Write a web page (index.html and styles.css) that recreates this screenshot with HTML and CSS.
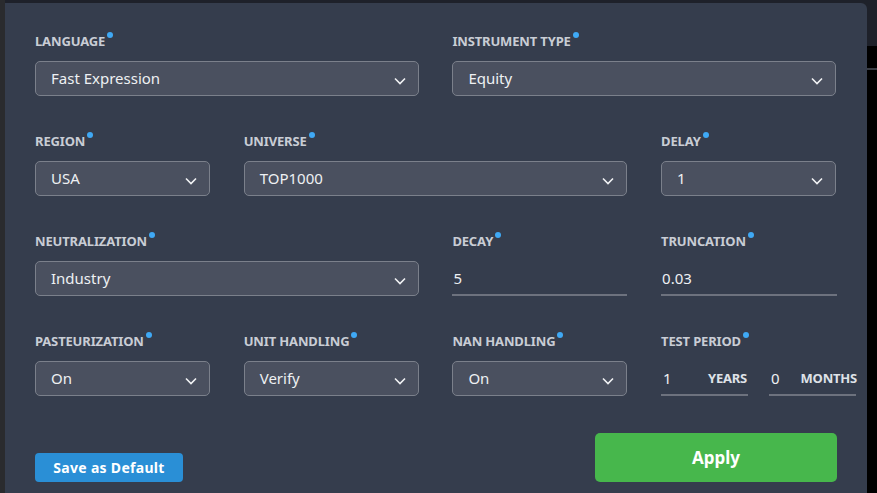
FILE: index.html
```html
<!DOCTYPE html>
<html>
<head>
<meta charset="utf-8">
<link rel="stylesheet" href="styles.css">
</head>
<body>
<div class="page">
  <div class="left-strip"></div>
  <div class="panel">
    <div class="grid">
      <div class="field span2">
        <div class="label">LANGUAGE<span class="dot"></span></div>
        <div class="select"><span>Fast Expression</span><svg class="chev" viewBox="0 0 12 8"><path d="M1 1.5 L6 6.5 L11 1.5"/></svg></div>
      </div>
      <div class="field span2">
        <div class="label">INSTRUMENT TYPE<span class="dot"></span></div>
        <div class="select"><span>Equity</span><svg class="chev" viewBox="0 0 12 8"><path d="M1 1.5 L6 6.5 L11 1.5"/></svg></div>
      </div>

      <div class="field">
        <div class="label">REGION<span class="dot"></span></div>
        <div class="select"><span>USA</span><svg class="chev" viewBox="0 0 12 8"><path d="M1 1.5 L6 6.5 L11 1.5"/></svg></div>
      </div>
      <div class="field span2">
        <div class="label">UNIVERSE<span class="dot"></span></div>
        <div class="select"><span>TOP1000</span><svg class="chev" viewBox="0 0 12 8"><path d="M1 1.5 L6 6.5 L11 1.5"/></svg></div>
      </div>
      <div class="field">
        <div class="label">DELAY<span class="dot"></span></div>
        <div class="select"><span>1</span><svg class="chev" viewBox="0 0 12 8"><path d="M1 1.5 L6 6.5 L11 1.5"/></svg></div>
      </div>

      <div class="field span2">
        <div class="label">NEUTRALIZATION<span class="dot"></span></div>
        <div class="select"><span>Industry</span><svg class="chev" viewBox="0 0 12 8"><path d="M1 1.5 L6 6.5 L11 1.5"/></svg></div>
      </div>
      <div class="field">
        <div class="label">DECAY<span class="dot"></span></div>
        <div class="input"><span>5</span></div>
      </div>
      <div class="field">
        <div class="label">TRUNCATION<span class="dot"></span></div>
        <div class="input wide"><span>0.03</span></div>
      </div>

      <div class="field">
        <div class="label">PASTEURIZATION<span class="dot"></span></div>
        <div class="select"><span>On</span><svg class="chev" viewBox="0 0 12 8"><path d="M1 1.5 L6 6.5 L11 1.5"/></svg></div>
      </div>
      <div class="field">
        <div class="label">UNIT HANDLING<span class="dot"></span></div>
        <div class="select"><span>Verify</span><svg class="chev" viewBox="0 0 12 8"><path d="M1 1.5 L6 6.5 L11 1.5"/></svg></div>
      </div>
      <div class="field">
        <div class="label">NAN HANDLING<span class="dot"></span></div>
        <div class="select"><span>On</span><svg class="chev" viewBox="0 0 12 8"><path d="M1 1.5 L6 6.5 L11 1.5"/></svg></div>
      </div>
      <div class="field">
        <div class="label">TEST PERIOD<span class="dot"></span></div>
        <div class="period">
          <div class="input period-input years"><span>1</span><span class="unit">YEARS</span></div>
          <div class="input period-input months"><span>0</span><span class="unit">MONTHS</span></div>
        </div>
      </div>
    </div>
    <div class="actions">
      <button class="btn-save">Save as Default</button>
      <button class="btn-apply">Apply</button>
    </div>
  </div>
  <div class="right-strip">
    <div class="rs-top"></div>
    <div class="rs-line"></div>
  </div>
</div>
</body>
</html>
```
FILE: styles.css
```css
* { box-sizing: border-box; }
html, body {
  margin: 0;
  padding: 0;
  background: #1e212a;
  height: 100%;
  overflow: hidden;
}
body {
  font-family: "Noto Sans", "Open Sans", sans-serif;
  color: #e9ebef;
}
.page {
  display: flex;
  width: 877px;
  height: 493px;
}
.left-strip {
  width: 5px;
  background: #2a2b2e;
}
.panel {
  width: 862px;
  margin-top: 3px;
  background: #353d4d;
  border-radius: 0 6px 0 0;
  padding: 28px 30px 0 30px;
}
.right-strip {
  width: 10px;
  background: #000;
  display: flex;
  flex-direction: column;
}
.rs-top {
  height: 46px;
  background: #1e212a;
}
.rs-line {
  margin-top: 22px;
  height: 2px;
  background: #3a3d45;
}
.grid {
  display: grid;
  grid-template-columns: repeat(4, 175px);
  column-gap: 33.7px;
  row-gap: 35px;
}
.span2 { grid-column: span 2; }
.label {
  font-size: 13px;
  font-weight: 700;
  color: #c9cdd5;
  line-height: 20px;
  height: 20px;
  margin-bottom: 10px;
  letter-spacing: -0.15px;
  display: flex;
  align-items: center;
}
.dot {
  display: inline-block;
  width: 6px;
  height: 6px;
  border-radius: 50%;
  background: #3fa9f5;
  margin-left: 2px;
  align-self: flex-start;
  margin-top: 1px;
}
.select {
  height: 35px;
  border: 1px solid #7b808b;
  border-radius: 5px;
  background: #4a505f;
  display: flex;
  align-items: center;
  justify-content: space-between;
  padding: 0 12px 0 15px;
  font-size: 15px;
  color: #eef0f3;
}
.select span { margin-top: -1px; }
.chev {
  width: 12px;
  height: 8px;
  margin-top: 4px;
  fill: none;
  stroke: #f1f2f4;
  stroke-width: 1.6;
}
.input {
  height: 35px;
  border-bottom: 2px solid #6d727e;
  display: flex;
  align-items: center;
  font-size: 15px;
  color: #eef0f3;
  padding-left: 1px;
}
.input.wide { width: 176px; }
.period {
  display: flex;
  gap: 21px;
  width: 195px;
}
.period-input {
  justify-content: space-between;
  padding-left: 2px;
}
.years { width: 87px; }
.months { width: 87px; }
.unit {
  font-size: 13px;
  font-weight: 700;
  color: #dfe2e7;
  letter-spacing: -0.2px;
}
.years .unit { margin-right: 1px; }
.months .unit { margin-right: -1px; }
.actions {
  display: flex;
  justify-content: space-between;
  align-items: flex-end;
  margin-top: 37px;
}
button {
  border: none;
  cursor: pointer;
  color: #fff;
  font-family: "Noto Sans", "Open Sans", sans-serif;
  font-weight: 700;
}
.btn-save {
  width: 148px;
  height: 29px;
  border-radius: 4px;
  background: #2a8fd6;
  font-size: 14px;
  letter-spacing: 0.3px;
}
.btn-apply {
  width: 242px;
  height: 49px;
  border-radius: 5px;
  background: #47b74c;
  font-size: 17px;
}
```
